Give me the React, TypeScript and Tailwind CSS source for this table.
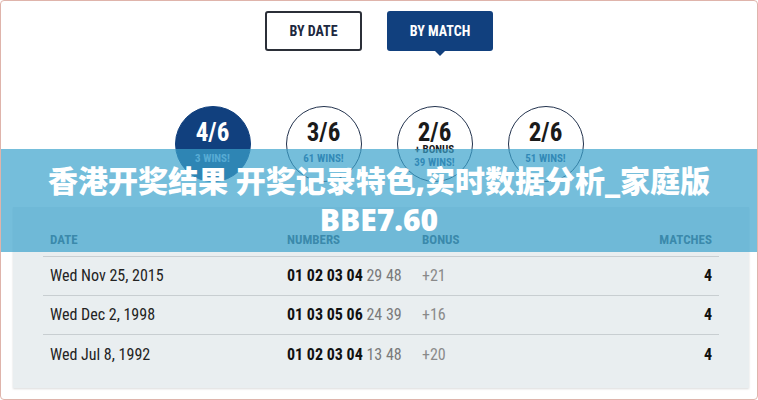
const narrow = "font-['Roboto','Open_Sans',sans-serif] [font-stretch:75%]";

type Draw = {
  date: string;
  main: string;
  extra: string;
  bonus: string;
  matches: number;
};

const draws: Draw[] = [
  { date: "Wed Nov 25, 2015", main: "01 02 03 04", extra: "29 48", bonus: "+21", matches: 4 },
  { date: "Wed Dec 2, 1998", main: "01 03 05 06", extra: "24 39", bonus: "+16", matches: 4 },
  { date: "Wed Jul 8, 1992", main: "01 02 03 04", extra: "13 48", bonus: "+20", matches: 4 },
];

type Tally = { score: string; wins: string; bonus?: boolean; active?: boolean };

const tallies: Tally[] = [
  { score: "4/6", wins: "3 WINS!", active: true },
  { score: "3/6", wins: "61 WINS!" },
  { score: "2/6", wins: "39 WINS!", bonus: true },
  { score: "2/6", wins: "51 WINS!" },
];

function Circle({ t }: { t: Tally }) {
  const ring = t.active
    ? "bg-[#11407e] border-[#11407e] text-white"
    : "bg-white border-[#22324d] text-[#1a1a1a]";
  return (
    <div
      className={`w-[76px] h-[76px] rounded-full border-[1.5px] flex flex-col items-center pt-[13px] ${ring} ${narrow}`}
    >
      <div className="text-[25px] leading-[25px] font-bold">{t.score}</div>
      {t.bonus ? (
        <>
          <div className="text-[11px] leading-[10px] font-bold text-[#1a1a1a]">+ BONUS</div>
          <div className="text-[11px] leading-[11px] font-bold mt-[2px] text-[#1d4f86]">{t.wins}</div>
        </>
      ) : (
        <div
          className={`text-[11px] leading-[12px] font-bold mt-[8px] ${
            t.active ? "text-[#9cc0e6]" : "text-[#1d4f86]"
          }`}
        >
          {t.wins}
        </div>
      )}
    </div>
  );
}

export default function App() {
  return (
    <div className="w-[758px] h-[400px] relative overflow-hidden bg-white border border-[#dfb4ab] rounded-[4px]">
      {/* toggle */}
      <div className="flex justify-center gap-[25px] pt-[10px]">
        <button
          className={`w-[97px] h-[40px] rounded-[3px] border-2 border-[#2b2f38] bg-white text-[14px] font-bold text-[#1d2840] ${narrow}`}
        >
          BY DATE
        </button>
        <div className="relative">
          <button
            className={`w-[106px] h-[40px] rounded-[3px] bg-[#11407e] text-[14px] font-bold text-white ${narrow}`}
          >
            BY MATCH
          </button>
          <div className="absolute left-1/2 -translate-x-1/2 top-[40px] w-0 h-0 border-l-[5px] border-r-[5px] border-t-[5px] border-l-transparent border-r-transparent border-t-[#11407e]" />
        </div>
      </div>

      {/* match tallies */}
      <div className="flex justify-center gap-[35px] mt-[55px]">
        {tallies.map((t, i) => (
          <Circle key={i} t={t} />
        ))}
      </div>

      {/* results */}
      <div className="ml-[12px] mr-[8px] mt-[25px] bg-[#e9eef0] shadow-[0_1px_2px_rgba(0,0,0,0.15)] pt-[26px] pb-[14px] pl-[30px] pr-[30px]">
        <div
          className={`flex items-center px-[7px] pb-[9px] border-b border-[#c8ced1] text-[13px] leading-[14px] font-bold text-[#3c4e5e] ${narrow}`}
        >
          <div className="w-[237px]">DATE</div>
          <div className="w-[135px]">NUMBERS</div>
          <div className="flex-1">BONUS</div>
          <div>MATCHES</div>
        </div>
        {draws.map((d, i) => (
          <div
            key={i}
            className={`flex items-center h-[39px] px-[7px] text-[16px] ${narrow} ${
              i < draws.length - 1 ? "border-b border-[#c8ced1]" : ""
            }`}
          >
            <div className="w-[237px] text-[#232323]">{d.date}</div>
            <div className="w-[135px] text-[#7a7a7a] whitespace-nowrap">
              <span className="font-bold text-[#111]">{d.main}</span> {d.extra}
            </div>
            <div className="flex-1 text-[#8a8a8a]">{d.bonus}</div>
            <div className="font-bold text-[#111]">{d.matches}</div>
          </div>
        ))}
      </div>

      {/* overlay banner */}
      <div className="absolute left-0 right-0 top-[148px] h-[103px] bg-[rgba(58,162,204,0.7)] pt-[12px] text-center text-white font-black text-[30px] leading-[39px] font-['Noto_Sans','Noto_Sans_CJK_SC',sans-serif]">
        <div>香港开奖结果 开奖记录特色,实时数据分析_家庭版</div>
        <div>BBE7.60</div>
      </div>
    </div>
  );
}
